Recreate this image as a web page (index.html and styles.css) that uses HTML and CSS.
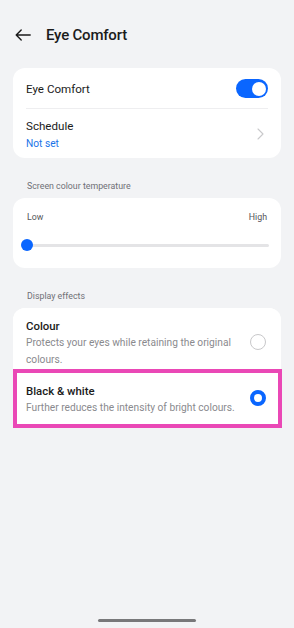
FILE: index.html
```html
<!DOCTYPE html>
<html lang="en">
<head>
<meta charset="utf-8">
<link rel="stylesheet" href="styles.css">
</head>
<body>
<div class="screen">
  <header class="topbar">
    <svg class="back" width="16" height="12" viewBox="0 0 16 12"><path d="M15.2 6H1.2M6.2 1L1.2 6l5 5" fill="none" stroke="#1b1b1b" stroke-width="1.4" stroke-linecap="round" stroke-linejoin="round"/></svg>
    <h1 class="title">Eye Comfort</h1>
  </header>

  <section class="card">
    <div class="row row-toggle">
      <span class="row-title">Eye Comfort</span>
      <span class="toggle"><span class="knob"></span></span>
    </div>
    <div class="divider"></div>
    <div class="row row-schedule">
      <div class="row-text">
        <span class="row-title">Schedule</span>
        <span class="row-sub">Not set</span>
      </div>
      <svg class="chev" width="7" height="12" viewBox="0 0 7 12"><path d="M1 1l5 5-5 5" fill="none" stroke="#c9c9cb" stroke-width="1.1" stroke-linecap="round" stroke-linejoin="round"/></svg>
    </div>
  </section>

  <div class="section-label">Screen colour temperature</div>
  <section class="card card-slider">
    <div class="slider-labels"><span>Low</span><span>High</span></div>
    <div class="slider"><span class="track"></span><span class="thumb"></span></div>
  </section>

  <div class="section-label">Display effects</div>
  <section class="card card-effects">
    <div class="effect effect-first">
      <div class="effect-text">
        <span class="effect-title">Colour</span>
        <span class="effect-desc">Protects your eyes while retaining the original colours.</span>
      </div>
      <span class="radio"></span>
    </div>
    <div class="effect effect-selected">
      <div class="effect-text">
        <span class="effect-title">Black &amp; white</span>
        <span class="effect-desc">Further reduces the intensity of bright colours.</span>
      </div>
      <span class="radio radio-on"></span>
    </div>
  </section>

  <div class="spacer"></div>
  <div class="home-bar"></div>
</div>
</body>
</html>
```

FILE: styles.css
```css
* { box-sizing: border-box; margin: 0; padding: 0; }
html, body { width: 294px; height: 628px; }
body {
  background: #f2f3f5;
  font-family: Roboto, "Noto Sans", "Liberation Sans", sans-serif;
  color: #1b1b1b;
  overflow: hidden;
}
.screen {
  height: 628px;
  display: flex;
  flex-direction: column;
  padding: 0 13px;
}
.topbar {
  height: 68px;
  display: flex;
  align-items: center;
  gap: 15px;
  padding: 1px 0 0 2px;
}
.back { flex: none; }
.title { font-size: 15px; font-weight: 500; letter-spacing: -0.2px; line-height: 18px; }

.card {
  background: #fff;
  border-radius: 12px;
}
.row {
  display: flex;
  align-items: center;
  justify-content: space-between;
  padding: 0 13px;
}
.row-toggle { height: 40px; padding-top: 1px; }
.row-schedule { height: 49px; }
.row-title { font-size: 11.6px; line-height: 14px; }
.row-text { display: flex; flex-direction: column; gap: 4px; margin-top: 1px; }
.row-sub { font-size: 10.2px; line-height: 13px; color: #1a73e8; }
.divider { height: 1px; background: #eeeef0; margin: 0 13px; }
.toggle {
  width: 32px; height: 19px;
  border-radius: 10px;
  background: #0a66ff;
  position: relative;
  display: block;
}
.knob {
  position: absolute;
  right: 2.5px; top: 2.5px;
  width: 14px; height: 14px;
  border-radius: 50%;
  background: #fff;
}
.chev { margin-right: 4px; }

.section-label {
  font-size: 8.8px;
  line-height: 11px;
  color: #6f7075;
  padding: 0 13px 6px 14px;
  height: 40px;
  display: flex;
  align-items: flex-end;
}
.card-slider { height: 70px; padding: 14px 13px 0 13px; }
.slider-labels {
  display: flex; justify-content: space-between;
  font-size: 8.8px; line-height: 11px; color: #55565a;
  padding: 0 1px 0 1px;
}
.slider { position: relative; height: 12px; margin: 16px -1px 0 -6px; }
.track {
  position: absolute; left: 8px; right: 0; top: 5px;
  height: 3px; border-radius: 2px; background: #e4e4e6;
}
.thumb {
  position: absolute; left: 1px; top: 0;
  width: 12px; height: 12px; border-radius: 50%;
  background: #0a66ff;
}

.effect {
  display: flex; align-items: flex-start; justify-content: space-between;
  padding: 0 15px 0 13px;
  position: relative;
  background: #fff;
}
.effect-first { height: 61px; padding-top: 10px; border-radius: 12px 12px 0 0; }
.effect-first .radio { margin-top: 16px; }
.effect-selected { height: 59px; padding-top: 14px; }
.effect-selected .radio { margin-top: 7px; }
.effect-selected::after {
  content: "";
  position: absolute;
  left: 0; right: -1px; top: 0; bottom: 0;
  border: 4px solid #ea48b6;
}
.effect-text { display: flex; flex-direction: column; width: 214px; }
.effect-title { font-size: 11.4px; font-weight: 500; line-height: 16px; }
.effect-desc { font-size: 10.2px; color: #8a8a8e; line-height: 17px; }
.radio {
  width: 16px; height: 16px; border-radius: 50%;
  border: 1.3px solid #c8c8ca;
  flex: none;
}
.radio-on { border: 4.5px solid #0a66ff; }

.spacer { flex: 1; }
.home-bar {
  width: 98px; height: 3.5px; border-radius: 2px;
  background: #78787a;
  align-self: center;
  margin-bottom: 6px;
}
```
